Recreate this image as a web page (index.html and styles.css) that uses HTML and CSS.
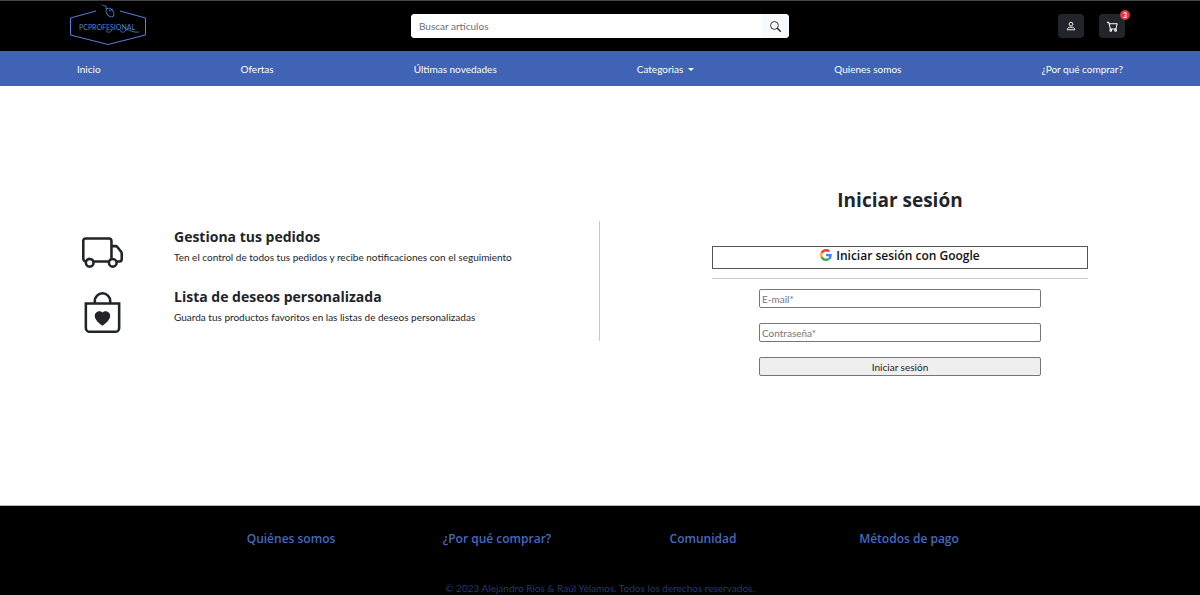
FILE: index.html
```html
<!DOCTYPE html>
<html lang="es">
<head>
<meta charset="utf-8">
<meta name="viewport" content="width=device-width, initial-scale=1">
<title>PCProfesional - Iniciar sesión</title>
<link rel="stylesheet" href="styles.css">
</head>
<body>
<header class="topbar">
  <a class="logo" href="#" aria-label="PCProfesional">
    <svg width="78" height="44" viewBox="0 0 78 44" fill="none" stroke="#5580dc" stroke-width="1">
      <path d="M27 7 L1.500 14 V31 L39 40.500 L76.500 31 V14 L51 7"/>
      <ellipse cx="41" cy="8.500" rx="3.300" ry="4.800" transform="rotate(-38 41 8.500)"/>
      <path d="M38 5.500 C35 4 39 3 36.500 2 C35 1.500 34 2 33 .5 M40 7 L43.500 5"/>
      <path d="M37 26 C38 29 41 29 43 26 M51 26 C52 29 55 29 57 26 C60 24.500 62 29 70 28" stroke-width=".8"/>
      <text class="logo-text" x="10" y="26">PCPROFESIONAL</text>
    </svg>
  </a>
  <form class="search" role="search">
    <input class="search-input" type="search" placeholder="Buscar artículos" aria-label="Buscar artículos">
    <button class="search-button" type="button" aria-label="Buscar">
      <svg width="11" height="11" viewBox="0 0 16 16" fill="none" stroke="#212529" stroke-width="1.300"><circle cx="6.500" cy="6.500" r="5.700"/><path d="M10.700 10.700 L15 15" stroke-width="2" stroke-linecap="round"/></svg>
    </button>
  </form>
  <div class="actions">
    <button class="icon-button" type="button" aria-label="Mi cuenta">
      <svg width="10" height="10" viewBox="0 0 16 16" fill="none" stroke="#fff" stroke-width="1.500"><circle cx="8" cy="5" r="3"/><path d="M2 14 C2 11 4 10 8 10 S14 11 14 14 Z" stroke-linejoin="round"/></svg>
    </button>
    <button class="icon-button" type="button" aria-label="Carrito, 3 artículos">
      <svg width="11" height="11" viewBox="0 0 16 16" fill="none" stroke="#fff" stroke-width="1.500"><path d="M0 2 H2.500 L5 11.500 H13 L14.800 4 H3.200" stroke-linejoin="round"/><circle cx="5.500" cy="13.700" r="1.300"/><circle cx="12.500" cy="13.700" r="1.300"/></svg>
      <span class="badge">3</span>
    </button>
  </div>
</header>
<nav class="menu">
  <a href="#">Inicio</a>
  <a href="#">Ofertas</a>
  <a href="#">Últimas novedades</a>
  <a class="dropdown" href="#">Categorias</a>
  <a href="#">Quienes somos</a>
  <a href="#">¿Por qué comprar?</a>
</nav>
<main class="content">
  <section class="benefits">
    <article class="benefit">
      <svg class="benefit-icon" width="41" height="41" viewBox="0 0 16 16" fill="#212529"><path d="M0 3.500A1.500 1.500 0 0 1 1.500 2h9A1.500 1.500 0 0 1 12 3.500V5h1.020a1.500 1.500 0 0 1 1.170.563l1.481 1.850a1.500 1.500 0 0 1 .329.938V10.500a1.500 1.500 0 0 1-1.500 1.500H14a2 2 0 1 1-4 0H5a2 2 0 1 1-3.998-.085A1.500 1.500 0 0 1 0 10.500zm1.294 7.456A2 2 0 0 1 4.732 11h5.536a2 2 0 0 1 .732-.732V3.500a.5.5 0 0 0-.5-.5h-9a.5.5 0 0 0-.5.5v7a.5.5 0 0 0 .294.456M12 10a2 2 0 0 1 1.732 1h.768a.5.5 0 0 0 .5-.5V8.350a.5.5 0 0 0-.11-.312l-1.480-1.850A.5.5 0 0 0 13.020 6H12zm-9 1a1 1 0 1 0 0 2 1 1 0 0 0 0-2m9 0a1 1 0 1 0 0 2 1 1 0 0 0 0-2"/></svg>
      <div class="benefit-text">
        <h2>Gestiona tus pedidos</h2>
        <p>Ten el control de todos tus pedidos y recibe notificaciones con el seguimiento</p>
      </div>
    </article>
    <article class="benefit">
      <svg class="benefit-icon" width="41" height="41" viewBox="0 0 16 16" fill="#212529"><path fill-rule="evenodd" d="M10.500 3.500a2.500 2.500 0 0 0-5 0V4h5zm1 0V4H15v10a2 2 0 0 1-2 2H3a2 2 0 0 1-2-2V4h3.500v-.5a3.500 3.500 0 1 1 7 0M14 14V5H2v9a1 1 0 0 0 1 1h10a1 1 0 0 0 1-1M8 7.993c1.664-1.711 5.825 1.283 0 5.132-5.825-3.850-1.664-6.843 0-5.132"/></svg>
      <div class="benefit-text">
        <h2>Lista de deseos personalizada</h2>
        <p>Guarda tus productos favoritos en las listas de deseos personalizadas</p>
      </div>
    </article>
  </section>
  <section class="login">
    <h1>Iniciar sesión</h1>
    <button class="google" type="button">
      <svg width="12" height="12" viewBox="0 0 48 48"><path fill="#EA4335" d="M24 9.500c3.540 0 6.710 1.220 9.210 3.600l6.850-6.850C35.900 2.380 30.470 0 24 0 14.620 0 6.510 5.380 2.560 13.220l7.980 6.190C12.430 13.720 17.740 9.500 24 9.500z"/><path fill="#4285F4" d="M46.980 24.550c0-1.570-.15-3.090-.38-4.550H24v9.020h12.940c-.58 2.960-2.260 5.480-4.780 7.180l7.730 6c4.510-4.180 7.090-10.360 7.090-17.650z"/><path fill="#FBBC05" d="M10.530 28.590c-.48-1.450-.76-2.990-.76-4.590s.27-3.140.76-4.590l-7.980-6.190C.92 16.460 0 20.120 0 24s.92 7.540 2.560 10.780z"/><path fill="#34A853" d="M24 48c6.480 0 11.930-2.130 15.890-5.810l-7.730-6c-2.150 1.450-4.920 2.300-8.160 2.300-6.260 0-11.570-4.220-13.470-9.910l-7.980 6.190C6.510 42.620 14.620 48 24 48z"/></svg>
      Iniciar sesión con Google
    </button>
    <form class="login-form">
      <input type="email" placeholder="E-mail*" aria-label="E-mail">
      <input type="password" placeholder="Contraseña*" aria-label="Contraseña">
      <button type="button">Iniciar sesión</button>
    </form>
  </section>
</main>
<footer class="footer">
  <div class="footer-links">
    <a href="#">Quiénes somos</a>
    <a href="#">¿Por qué comprar?</a>
    <a href="#">Comunidad</a>
    <a href="#">Métodos de pago</a>
  </div>
  <p class="copyright">© 2023 Alejandro Ríos &amp; Raúl Yélamos. Todos los derechos reservados.</p>
</footer>
</body>
</html>
```
FILE: styles.css
```css
* { box-sizing: border-box; }
body {
  display: flex;
  flex-direction: column;
  min-height: 100vh;
  margin: 0;
  background: #fff;
  color: #212529;
  font: 10px/14px Lato, "Noto Sans", sans-serif;
}
h1, h2, p { margin: 0; }
a { color: inherit; text-decoration: none; }
button, input { font: inherit; color: inherit; }
svg { flex: none; }

.topbar {
  display: grid;
  grid-template-columns: 1fr minmax(0, 378px) 1fr;
  align-items: center;
  padding: 3px 69px;
  border-top: 1px solid #444;
  background: #000;
}
.logo { display: flex; }
.logo-text { fill: #5580dc; stroke: none; font: 7px Lato, sans-serif; }
.search {
  display: flex;
  height: 24px;
  border-radius: 4px;
  overflow: hidden;
  background: #fff;
}
.search-input {
  flex: 1;
  min-width: 0;
  padding: 0 8px;
  border: 0;
  background: #fff;
}
.search-input::placeholder { color: #6c7075; }
.search-button {
  display: grid;
  place-items: center;
  width: 27px;
  padding: 0;
  border: 0;
  background: #f8f9fa;
}
.actions {
  display: flex;
  justify-content: flex-end;
  gap: 15px;
  padding-right: 6px;
}
.icon-button {
  position: relative;
  display: grid;
  place-items: center;
  width: 26px;
  height: 24px;
  padding: 0;
  border: 0;
  border-radius: 4px;
  background: #212529;
}
.badge {
  position: absolute;
  top: -4px;
  right: -5px;
  width: 10px;
  height: 10px;
  border-radius: 5px;
  background: #dc3545;
  color: #fff;
  font-size: 7px;
  font-weight: 700;
  line-height: 10px;
  text-align: center;
}

.menu {
  display: flex;
  justify-content: space-between;
  padding: 11px 77px 10px;
  background: #4063b5;
  color: #fff;
}
.dropdown { display: flex; align-items: center; gap: 5px; }
.dropdown::after {
  content: "";
  border: 3px solid transparent;
  border-top-color: #fff;
  border-bottom: 0;
}

.content {
  flex: 1;
  display: grid;
  grid-template-columns: 1fr 1fr;
  align-items: start;
  padding-top: 100px;
}
.benefits {
  margin-top: 35px;
  padding-left: 82px;
  border-right: 1px solid #c8c9ca;
}
.benefit {
  display: flex;
  align-items: center;
  gap: 51px;
  height: 60px;
}
.benefit-icon { margin-top: 2px; }
.benefit-text { padding-bottom: 13px; }
.benefit h2 {
  margin-bottom: 2px;
  font: 700 14px/22px "Open Sans", sans-serif;
}
.login { width: 376px; max-width: 90%; margin: 0 auto; }
.login h1 {
  margin-bottom: 32px;
  font: 700 19px/28px "Open Sans", sans-serif;
  text-align: center;
}
.google {
  display: flex;
  justify-content: center;
  gap: 4px;
  width: 100%;
  height: 23px;
  padding: 2px 0 4px;
  border: 1px solid #555;
  background: #fff;
  color: #111;
  font: 600 12px/14px "Open Sans", sans-serif;
}
.login-form {
  display: flex;
  flex-direction: column;
  align-items: center;
  gap: 15px;
  margin-top: 9px;
  padding-top: 10px;
  border-top: 1px solid #ccc;
}
.login-form > * {
  width: 75%;
  height: 19px;
  padding: 0 2px;
  border: 1px solid #767676;
  border-radius: 2px;
}
.login-form input::placeholder { color: #757575; }
.login-form button { background: #efefef; color: #222; }

.footer {
  padding-top: 24px;
  border-top: 1px solid #b5bcbc;
  background: #000;
  text-align: center;
}
.footer-links {
  display: grid;
  grid-template-columns: repeat(4, 1fr);
  width: 824px;
  max-width: 100%;
  margin: 0 auto 34px;
  color: #4569bd;
  font: 600 12px/18px "Open Sans", sans-serif;
}
.copyright { color: #28376f; line-height: 13px; }
```
